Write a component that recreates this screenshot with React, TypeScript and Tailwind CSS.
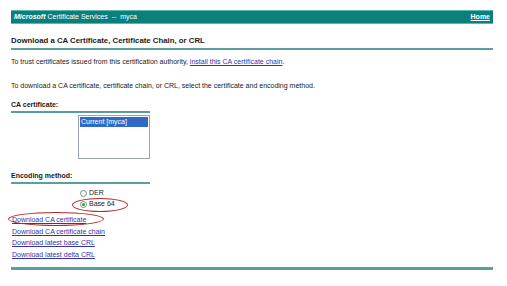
import React from 'react';

const links = [
  'Download CA certificate',
  'Download CA certificate chain',
  'Download latest base CRL',
  'Download latest delta CRL',
];

const Radio: React.FC<{ checked?: boolean; label: string }> = ({ checked, label }) => (
  <div className="flex items-center h-[11px] gap-[2px]">
    <span className="w-[7px] h-[7px] rounded-full border border-[#7a8a99] bg-white flex items-center justify-center">
      {checked && <span className="w-[3px] h-[3px] rounded-full bg-[#21a121]"></span>}
    </span>
    <span>{label}</span>
  </div>
);

const SectionLabel: React.FC<{ children: React.ReactNode }> = ({ children }) => (
  <div className="w-[139px] border-b-2 border-[#5a9ea0] font-bold text-[7px] leading-[10px] pb-[1px]">
    {children}
  </div>
);

const App: React.FC = () => {
  return (
    <div
      className="relative w-[507px] h-[286px] bg-white text-[#1a1a1a] text-[7px] overflow-hidden pt-[10px] pl-[11px]"
      style={{ fontFamily: '"Liberation Sans", Arial, sans-serif' }}
    >
      <div className="w-[482px]">
        <div className="h-[14px] bg-[#0b7f7c] border-y border-[#5fb3b0] flex items-center justify-between px-[3px] text-white">
          <span>
            <b className="italic">Microsoft</b> Certificate Services &nbsp;--&nbsp; myca
          </span>
          <a className="font-bold underline">Home</a>
        </div>

        <div className="mt-[12px] border-b-2 border-[#5a9ea0] font-bold text-[7.8px] leading-[10px] pb-[2px]">
          Download a CA Certificate, Certificate Chain, or CRL
        </div>

        <p className="mt-[7px] leading-[10px]">
          To trust certificates issued from this certification authority,{' '}
          <a className="text-[#3434b0] underline">install this CA certificate chain</a>.
        </p>

        <p className="mt-[14px] leading-[10px]">
          To download a CA certificate, certificate chain, or CRL, select the certificate and encoding method.
        </p>

        <div className="mt-[9px]">
          <SectionLabel>CA certificate:</SectionLabel>
        </div>

        <div className="ml-[67px] mt-[2px] w-[72px] h-[44px] border border-[#9aa5b0] bg-white p-[1px]">
          <div className="bg-[#316ac5] text-white leading-[10px] px-[1px]">Current [myca]</div>
        </div>

        <div className="mt-[12px]">
          <SectionLabel>Encoding method:</SectionLabel>
        </div>

        <div className="ml-[69px] mt-[4px] flex flex-col">
          <Radio label="DER" />
          <Radio checked label="Base 64" />
        </div>

        <div className="mt-[4px] ml-[1px] flex flex-col">
          {links.map(l => (
            <a key={l} className="text-[#3434b0] underline leading-[11.5px]">
              {l}
            </a>
          ))}
        </div>

        <div className="mt-[7px] border-b-[3px] border-[#5a9ea0]"></div>
      </div>

      {/* red annotation ellipses */}
      <div className="absolute left-[72px] top-[198px] w-[56px] h-[14px] rounded-[50%] border border-[#b52a2a]"></div>
      <div className="absolute left-[8px] top-[212px] w-[96px] h-[14px] rounded-[50%] border border-[#b52a2a]"></div>
    </div>
  );
};

export default App;
